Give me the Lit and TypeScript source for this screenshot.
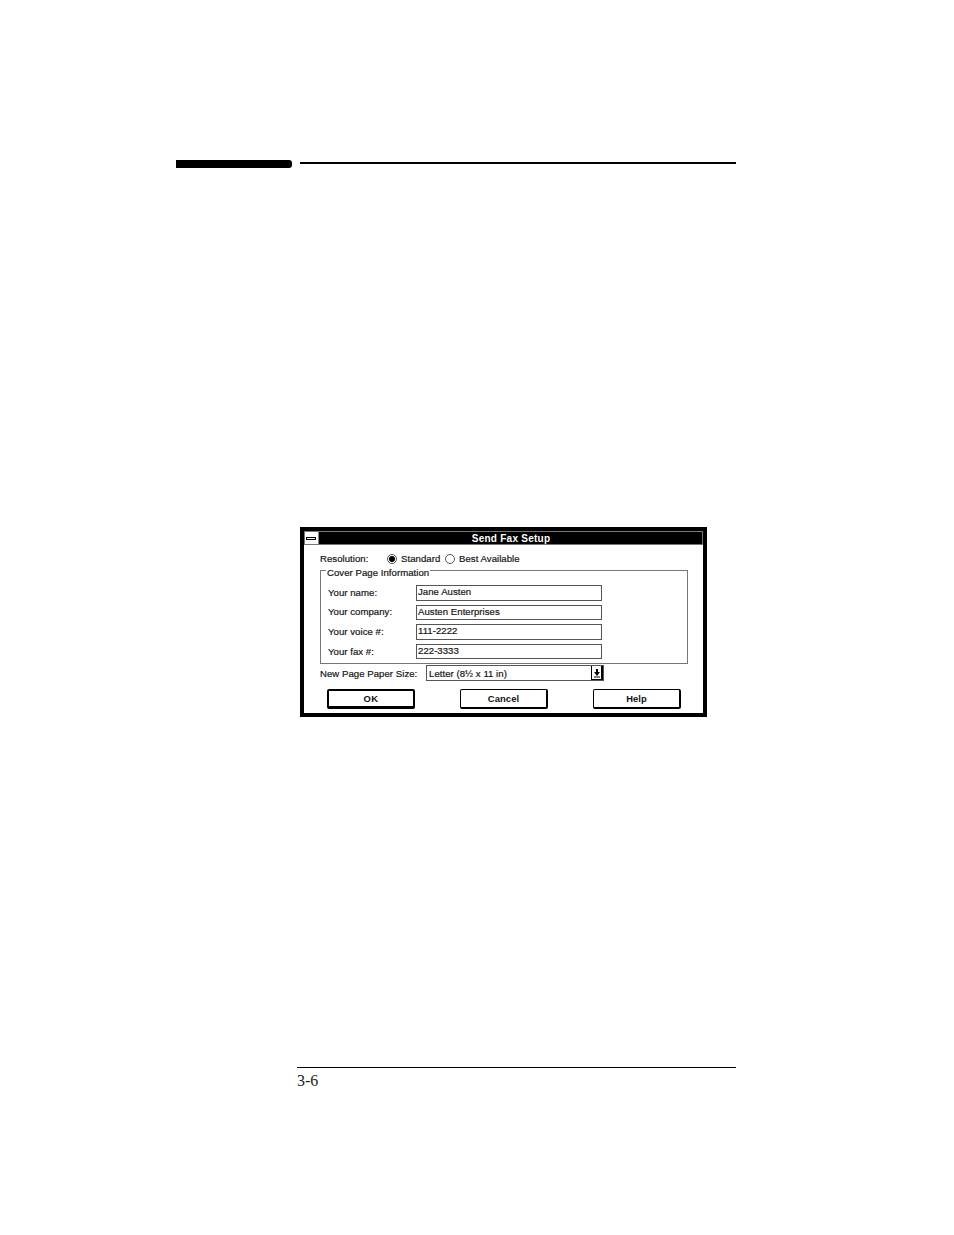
import { LitElement, html, css } from "lit";
import { customElement } from "lit/decorators.js";

@customElement("app-root")
export class AppRoot extends LitElement {
  static styles = css`
    :host { display: block; width: 954px; height: 1235px; background: #fff; overflow: hidden; font-family: "Liberation Sans", sans-serif; color: #111; }
    .page { display: flex; flex-direction: column; height: 100%; padding: 160px 218px 0 176px; box-sizing: border-box; }
    .rule { display: flex; align-items: flex-start; gap: 8px; height: 8px; }
    .thick { width: 116px; height: 8px; background: #000; border-radius: 0 3px 3px 0; }
    .thin { flex: 1; height: 2px; margin-top: 2px; background: #000; }
    .dialog { margin: 359px 0 0 124px; width: 407px; height: 190px; box-sizing: border-box; border: 4px solid #000; background: #fff; display: flex; flex-direction: column; font-size: 9.6px; letter-spacing: 0.04px; -webkit-text-stroke: 0.2px #222; }
    .titlebar { height: 14px; display: flex; background: #000; flex: none; outline: 1px solid #777; outline-offset: -1px; }
    .sys { width: 15px; background: #fff; display: flex; align-items: center; justify-content: center; border-right: 1px solid #000; box-sizing: border-box; outline: 1px solid #888; outline-offset: -1px; }
    .sys i { display: block; width: 10px; height: 3px; border: 1px solid #000; box-sizing: border-box; }
    .title { flex: 1; text-align: center; color: #fff; font-weight: bold; font-size: 10px; line-height: 16px; letter-spacing: 0.25px; -webkit-text-stroke: 0; }
    .body { flex: 1; padding: 8px 19px 0 16px; display: flex; flex-direction: column; }
    .res { display: flex; align-items: center; height: 11px; }
    .res .lbl { width: 67px; }
    .radio { width: 10px; height: 10px; border: 1px solid #555; border-radius: 50%; box-sizing: border-box; display: flex; align-items: center; justify-content: center; margin-right: 4px; flex: none; }
    .radio.on::after { content: ""; width: 6px; height: 6px; background: #000; border-radius: 50%; }
    .opt { width: 44px; }
    fieldset { margin: 6px 0 0; padding: 0; width: 368px; height: 94px; box-sizing: border-box; border: 1px solid #777; min-width: 0; position: relative; }
    .legend { position: absolute; left: 5px; top: -3px; background: #fff; padding: 0 1px; line-height: 10px; }
    .rows { display: flex; flex-direction: column; gap: 4px; padding: 14px 0 0 7px; }
    .row { display: flex; align-items: center; height: 15.6px; }
    .row .lbl { width: 88px; padding-bottom: 1px; }
    .input { width: 186px; height: 15.6px; box-sizing: border-box; border: 1px solid #555; padding-left: 1px; line-height: 12.5px; white-space: nowrap; }
    .paper { display: flex; align-items: center; height: 16px; margin-top: 1px; }
    .paper .lbl { width: 106px; }
    .combo { width: 178px; height: 16px; box-sizing: border-box; border: 1px solid #555; display: flex; align-items: center; padding-left: 2px; }
    .combo span { flex: 1; }
    .arrow { width: 12px; height: 14px; border-left: 1px solid #000; border-right: 2px solid #000; border-bottom: 1px solid #000; box-sizing: border-box; display: flex; align-items: center; justify-content: center; background: #fff; }
    .buttons { display: flex; justify-content: space-between; padding: 8px 0 0 7px; width: 354px; box-sizing: content-box; }
    .btn { width: 88px; height: 20px; box-sizing: border-box; border: 1px solid #000; border-right-width: 2px; border-bottom-width: 2px; border-radius: 2px; text-align: center; line-height: 18px; font-weight: bold; font-size: 9.4px; letter-spacing: 0.1px; -webkit-text-stroke: 0; }
    .btn.def { border-width: 2px; border-bottom-width: 3px; line-height: 16px; letter-spacing: 0.4px; }
    .footer { margin: 350px 0 0 121px; border-top: 1px solid #000; padding-top: 3px; font-family: "Liberation Serif", serif; font-size: 16px; line-height: 20px; color: #222; }
  `;

  private fields = [
    ["Your name:", "Jane Austen"],
    ["Your company:", "Austen Enterprises"],
    ["Your voice #:", "111-2222"],
    ["Your fax #:", "222-3333"],
  ];

  render() {
    return html`<div class="page">
      <div class="rule"><div class="thick"></div><div class="thin"></div></div>
      <div class="dialog">
        <div class="titlebar">
          <div class="sys"><i></i></div>
          <div class="title">Send Fax Setup</div>
        </div>
        <div class="body">
          <div class="res">
            <span class="lbl">Resolution:</span>
            <span class="radio on"></span><span class="opt">Standard</span>
            <span class="radio"></span><span>Best Available</span>
          </div>
          <fieldset>
            <div class="legend">Cover Page Information</div>
            <div class="rows">
              ${this.fields.map(([l, v]) => html`<div class="row"><span class="lbl">${l}</span><div class="input">${v}</div></div>`)}
            </div>
          </fieldset>
          <div class="paper">
            <span class="lbl">New Page Paper Size:</span>
            <div class="combo"><span>Letter (8½ x 11 in)</span>
              <div class="arrow"><svg width="8" height="10" viewBox="0 0 8 10"><path d="M3 1h2v3h2L4 8 1 4h2z" fill="#000"/><path d="M1 9h6" stroke="#000" stroke-width="1"/></svg></div>
            </div>
          </div>
          <div class="buttons">
            <div class="btn def">OK</div><div class="btn">Cancel</div><div class="btn">Help</div>
          </div>
        </div>
      </div>
      <div class="footer">3-6</div>
    </div>`;
  }
}
